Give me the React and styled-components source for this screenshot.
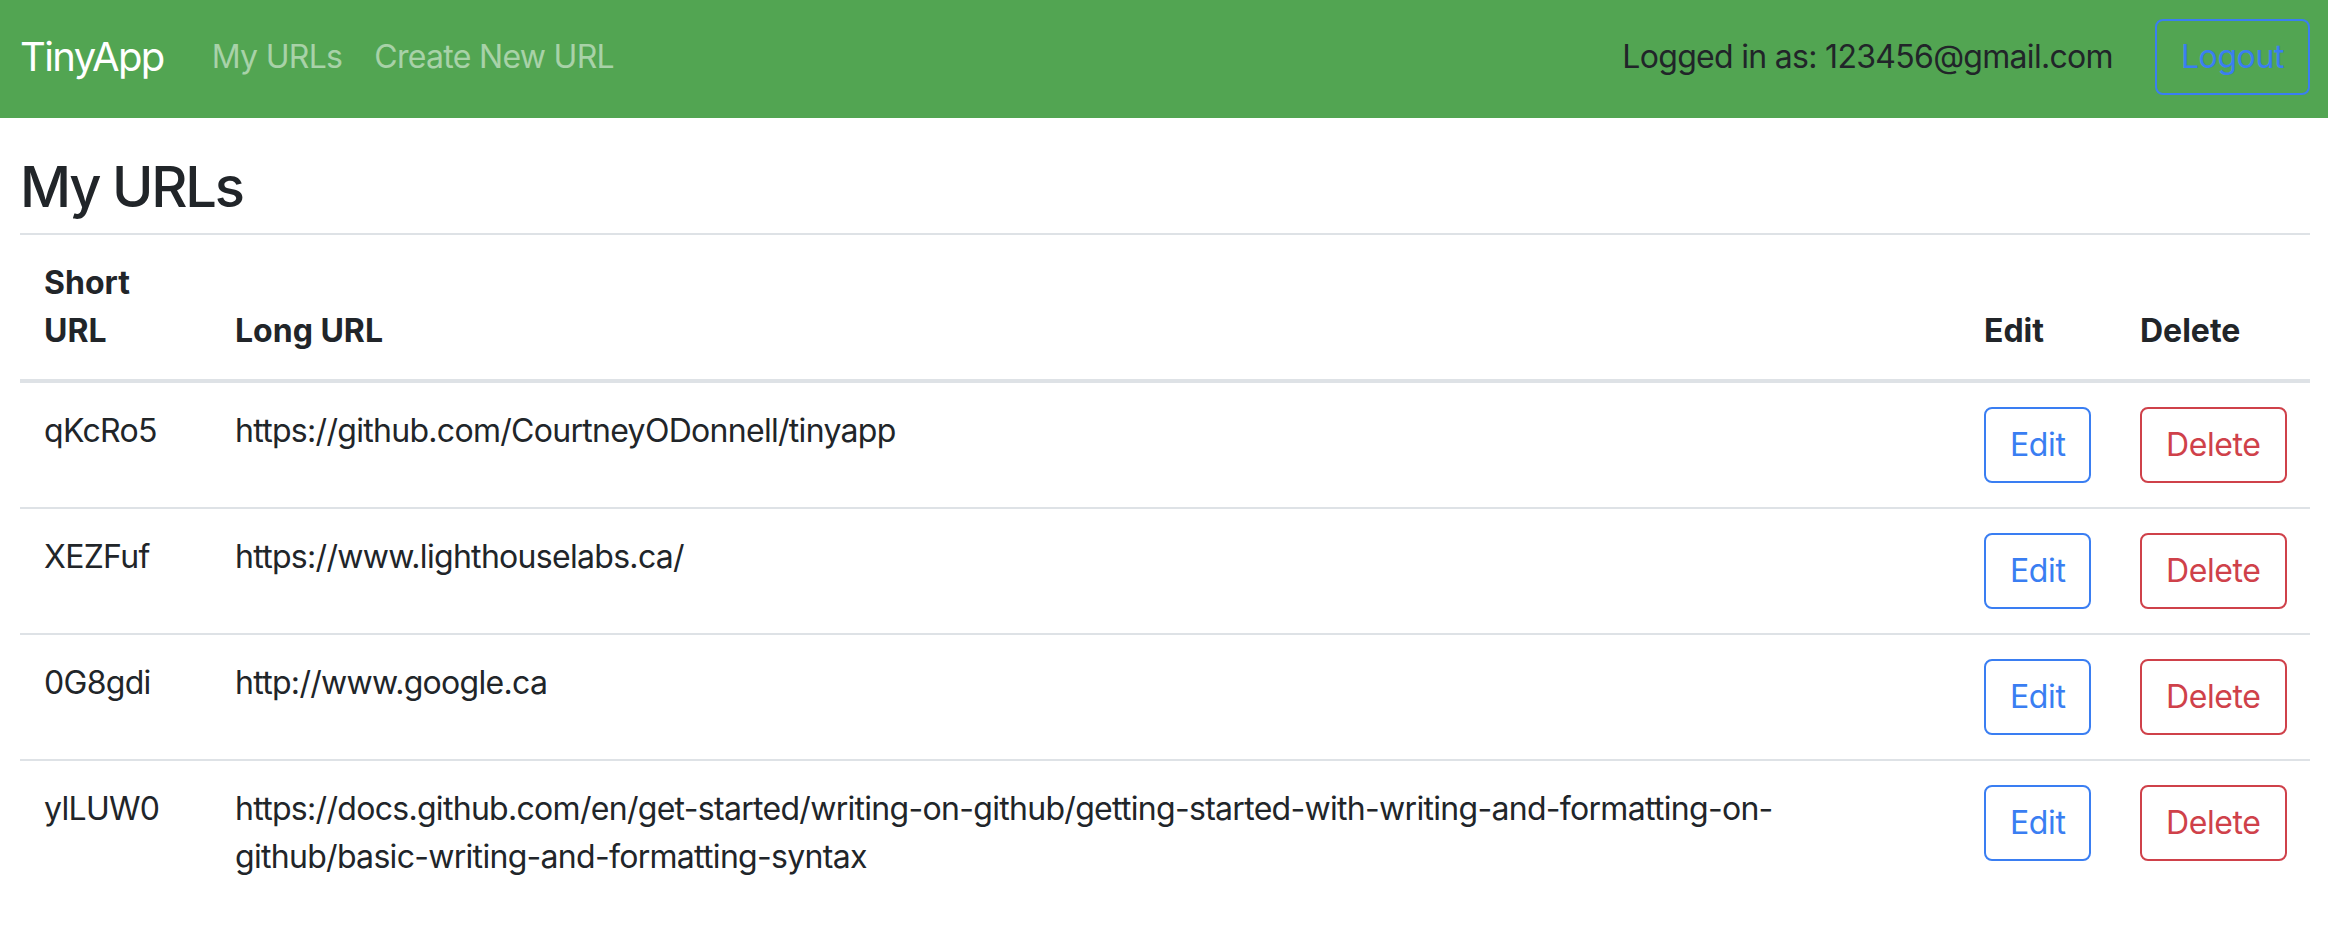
import React from "react";
import styled, { createGlobalStyle, css } from "styled-components";

const GlobalStyle = createGlobalStyle`
  html, body { margin: 0; padding: 0; background: #ffffff; }
  body {
    font-family: Inter, "Noto Sans", "Liberation Sans", sans-serif;
    font-size: 32px;
    line-height: 1.5;
    letter-spacing: -0.7px;
    color: #212529;
  }
  * { box-sizing: border-box; }
`;

const Navbar = styled.nav`
  display: flex;
  align-items: center;
  height: 118px;
  padding: 16px 18px 20px 20px;
  background: #52a552;
`;

const Brand = styled.a`
  font-size: 40px;
  line-height: 60px;
  letter-spacing: -1.6px;
  padding: 10px 0;
  margin-right: 32px;
  color: #ffffff;
  text-decoration: none;
  white-space: nowrap;
`;

const NavList = styled.div`
  display: flex;
  align-items: center;
  flex: 1;
`;

const NavLink = styled.a`
  padding: 16px;
  color: rgba(255, 255, 255, 0.5);
  text-decoration: none;
  white-space: nowrap;
`;

const UserArea = styled.div`
  display: flex;
  align-items: center;
  gap: 42px;
`;

const UserText = styled.span`
  color: #212529;
  white-space: nowrap;
`;

const variants = {
  primary: "#3a7ef2",
  danger: "#cf414a",
};

const OutlineButton = styled.button`
  font-family: inherit;
  font-size: 32px;
  line-height: 48px;
  letter-spacing: -0.4px;
  padding: 12px 24px;
  border: 2px solid ${(p) => variants[p.$variant]};
  border-radius: 8px;
  background: transparent;
  color: ${(p) => variants[p.$variant]};
  cursor: pointer;
  white-space: nowrap;
  display: inline-block;
  vertical-align: top;
`;

const Main = styled.main`
  padding: 0 18px 0 20px;
`;

const Title = styled.h1`
  margin: 36px 0 12px;
  font-size: 56px;
  line-height: 1.2;
  font-weight: 500;
  letter-spacing: -2.2px;
`;

const Table = styled.table`
  width: 100%;
  table-layout: fixed;
  border-collapse: separate;
  border-spacing: 0;
`;

const cellBase = css`
  padding: 24px;
  text-align: left;
  vertical-align: top;
`;

const HeadCell = styled.th`
  ${cellBase}
  font-weight: 700;
  letter-spacing: 0;
  border-top: 2px solid #dee2e6;
  border-bottom: 4px solid #dee2e6;
  vertical-align: bottom;
`;

const BodyRow = styled.tr`
  &:not(:first-child) > td {
    border-top: 2px solid #dee2e6;
  }
`;

const Cell = styled.td`
  ${cellBase}
`;

const urls = [
  { id: "qKcRo5", long: "https://github.com/CourtneyODonnell/tinyapp" },
  { id: "XEZFuf", long: "https://www.lighthouselabs.ca/" },
  { id: "0G8gdi", long: "http://www.google.ca" },
  {
    id: "ylLUW0",
    long:
      "https://docs.github.com/en/get-started/writing-on-github/getting-started-with-writing-and-formatting-on-github/basic-writing-and-formatting-syntax",
  },
];

export default function App() {
  return (
    <>
      <GlobalStyle />
      <Navbar>
        <Brand href="#">TinyApp</Brand>
        <NavList>
          <NavLink href="#">My URLs</NavLink>
          <NavLink href="#">Create New URL</NavLink>
        </NavList>
        <UserArea>
          <UserText>Logged in as: 123456@gmail.com</UserText>
          <OutlineButton $variant="primary">Logout</OutlineButton>
        </UserArea>
      </Navbar>
      <Main>
        <Title>My URLs</Title>
        <Table>
          <colgroup>
            <col style={{ width: 191 }} />
            <col />
            <col style={{ width: 156 }} />
            <col style={{ width: 194 }} />
          </colgroup>
          <thead>
            <tr>
              <HeadCell>Short URL</HeadCell>
              <HeadCell>Long URL</HeadCell>
              <HeadCell>Edit</HeadCell>
              <HeadCell>Delete</HeadCell>
            </tr>
          </thead>
          <tbody>
            {urls.map((u) => (
              <BodyRow key={u.id}>
                <Cell>{u.id}</Cell>
                <Cell>{u.long}</Cell>
                <Cell>
                  <OutlineButton $variant="primary">Edit</OutlineButton>
                </Cell>
                <Cell>
                  <OutlineButton $variant="danger">Delete</OutlineButton>
                </Cell>
              </BodyRow>
            ))}
          </tbody>
        </Table>
      </Main>
    </>
  );
}
